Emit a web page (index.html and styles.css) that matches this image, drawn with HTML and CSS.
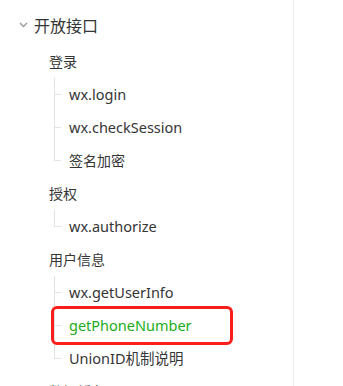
FILE: index.html
```html
<!DOCTYPE html>
<html lang="zh">
<head>
<meta charset="utf-8">
<link rel="stylesheet" href="styles.css">
</head>
<body>
<div class="page">
  <nav class="sidebar">
    <div class="top">
      <svg class="chev" width="9" height="6" viewBox="0 0 9 6"><path d="M1 1l3.5 3.5L8 1" fill="none" stroke="#9a9a9a" stroke-width="1.4"/></svg>
      <span>开放接口</span>
    </div>
    <div class="group">
      <div class="ghead">登录</div>
      <ul class="items">
        <li class="item">wx.login</li>
        <li class="item">wx.checkSession</li>
        <li class="item cjk">签名加密</li>
      </ul>
    </div>
    <div class="group">
      <div class="ghead">授权</div>
      <ul class="items">
        <li class="item">wx.authorize</li>
      </ul>
    </div>
    <div class="group">
      <div class="ghead">用户信息</div>
      <ul class="items">
        <li class="item">wx.getUserInfo</li>
        <li class="item active">getPhoneNumber</li>
        <li class="item">UnionID机制说明</li>
      </ul>
    </div>
    <div class="group">
      <div class="ghead">数据缓存</div>
    </div>
  </nav>
  <div class="divider"></div>
  <div class="rest"></div>
</div>
</body>
</html>
```
FILE: styles.css
```css
html, body {
  margin: 0;
  padding: 0;
  background: #fff;
}
body {
  font-family: "Noto Sans", "Noto Sans CJK SC", sans-serif;
  color: #353535;
  overflow: hidden;
  height: 386px;
}
.page {
  display: flex;
  height: 386px;
}
.sidebar {
  width: 293px;
  flex: none;
  padding-top: 8px;
  overflow: hidden;
}
.top {
  display: flex;
  align-items: center;
  height: 33px;
  padding-left: 19px;
  gap: 6px;
  font-size: 16px;
  margin-bottom: 4px;
}
.chev { flex: none; margin-top: 1px; }
.ghead {
  height: 33px;
  line-height: 33px;
  padding-left: 49px;
  font-size: 14px;
}
.items {
  list-style: none;
  margin: 0 0 0 54px;
  padding: 0;
}
.item {
  height: 33px;
  line-height: 33px;
  padding-left: 15px;
  font-size: 14.5px;
  background:
    linear-gradient(#e3e3e3, #e3e3e3) no-repeat 0 0 / 1px 100%,
    linear-gradient(#e3e3e3, #e3e3e3) no-repeat 0 50% / 7px 1px;
}
.item.cjk { font-size: 14px; }
.item:last-child {
  background:
    linear-gradient(#e3e3e3, #e3e3e3) no-repeat 0 0 / 1px 50%,
    linear-gradient(#e3e3e3, #e3e3e3) no-repeat 0 50% / 7px 1px;
}
.item.active {
  color: #1aad19;
  width: 161px;
  outline: 3px solid #fa1f1a;
  outline-offset: 0;
  border-radius: 3px;
}
.divider {
  width: 1px;
  background: #ececec;
  flex: none;
}
.rest { flex: 1; }
```
